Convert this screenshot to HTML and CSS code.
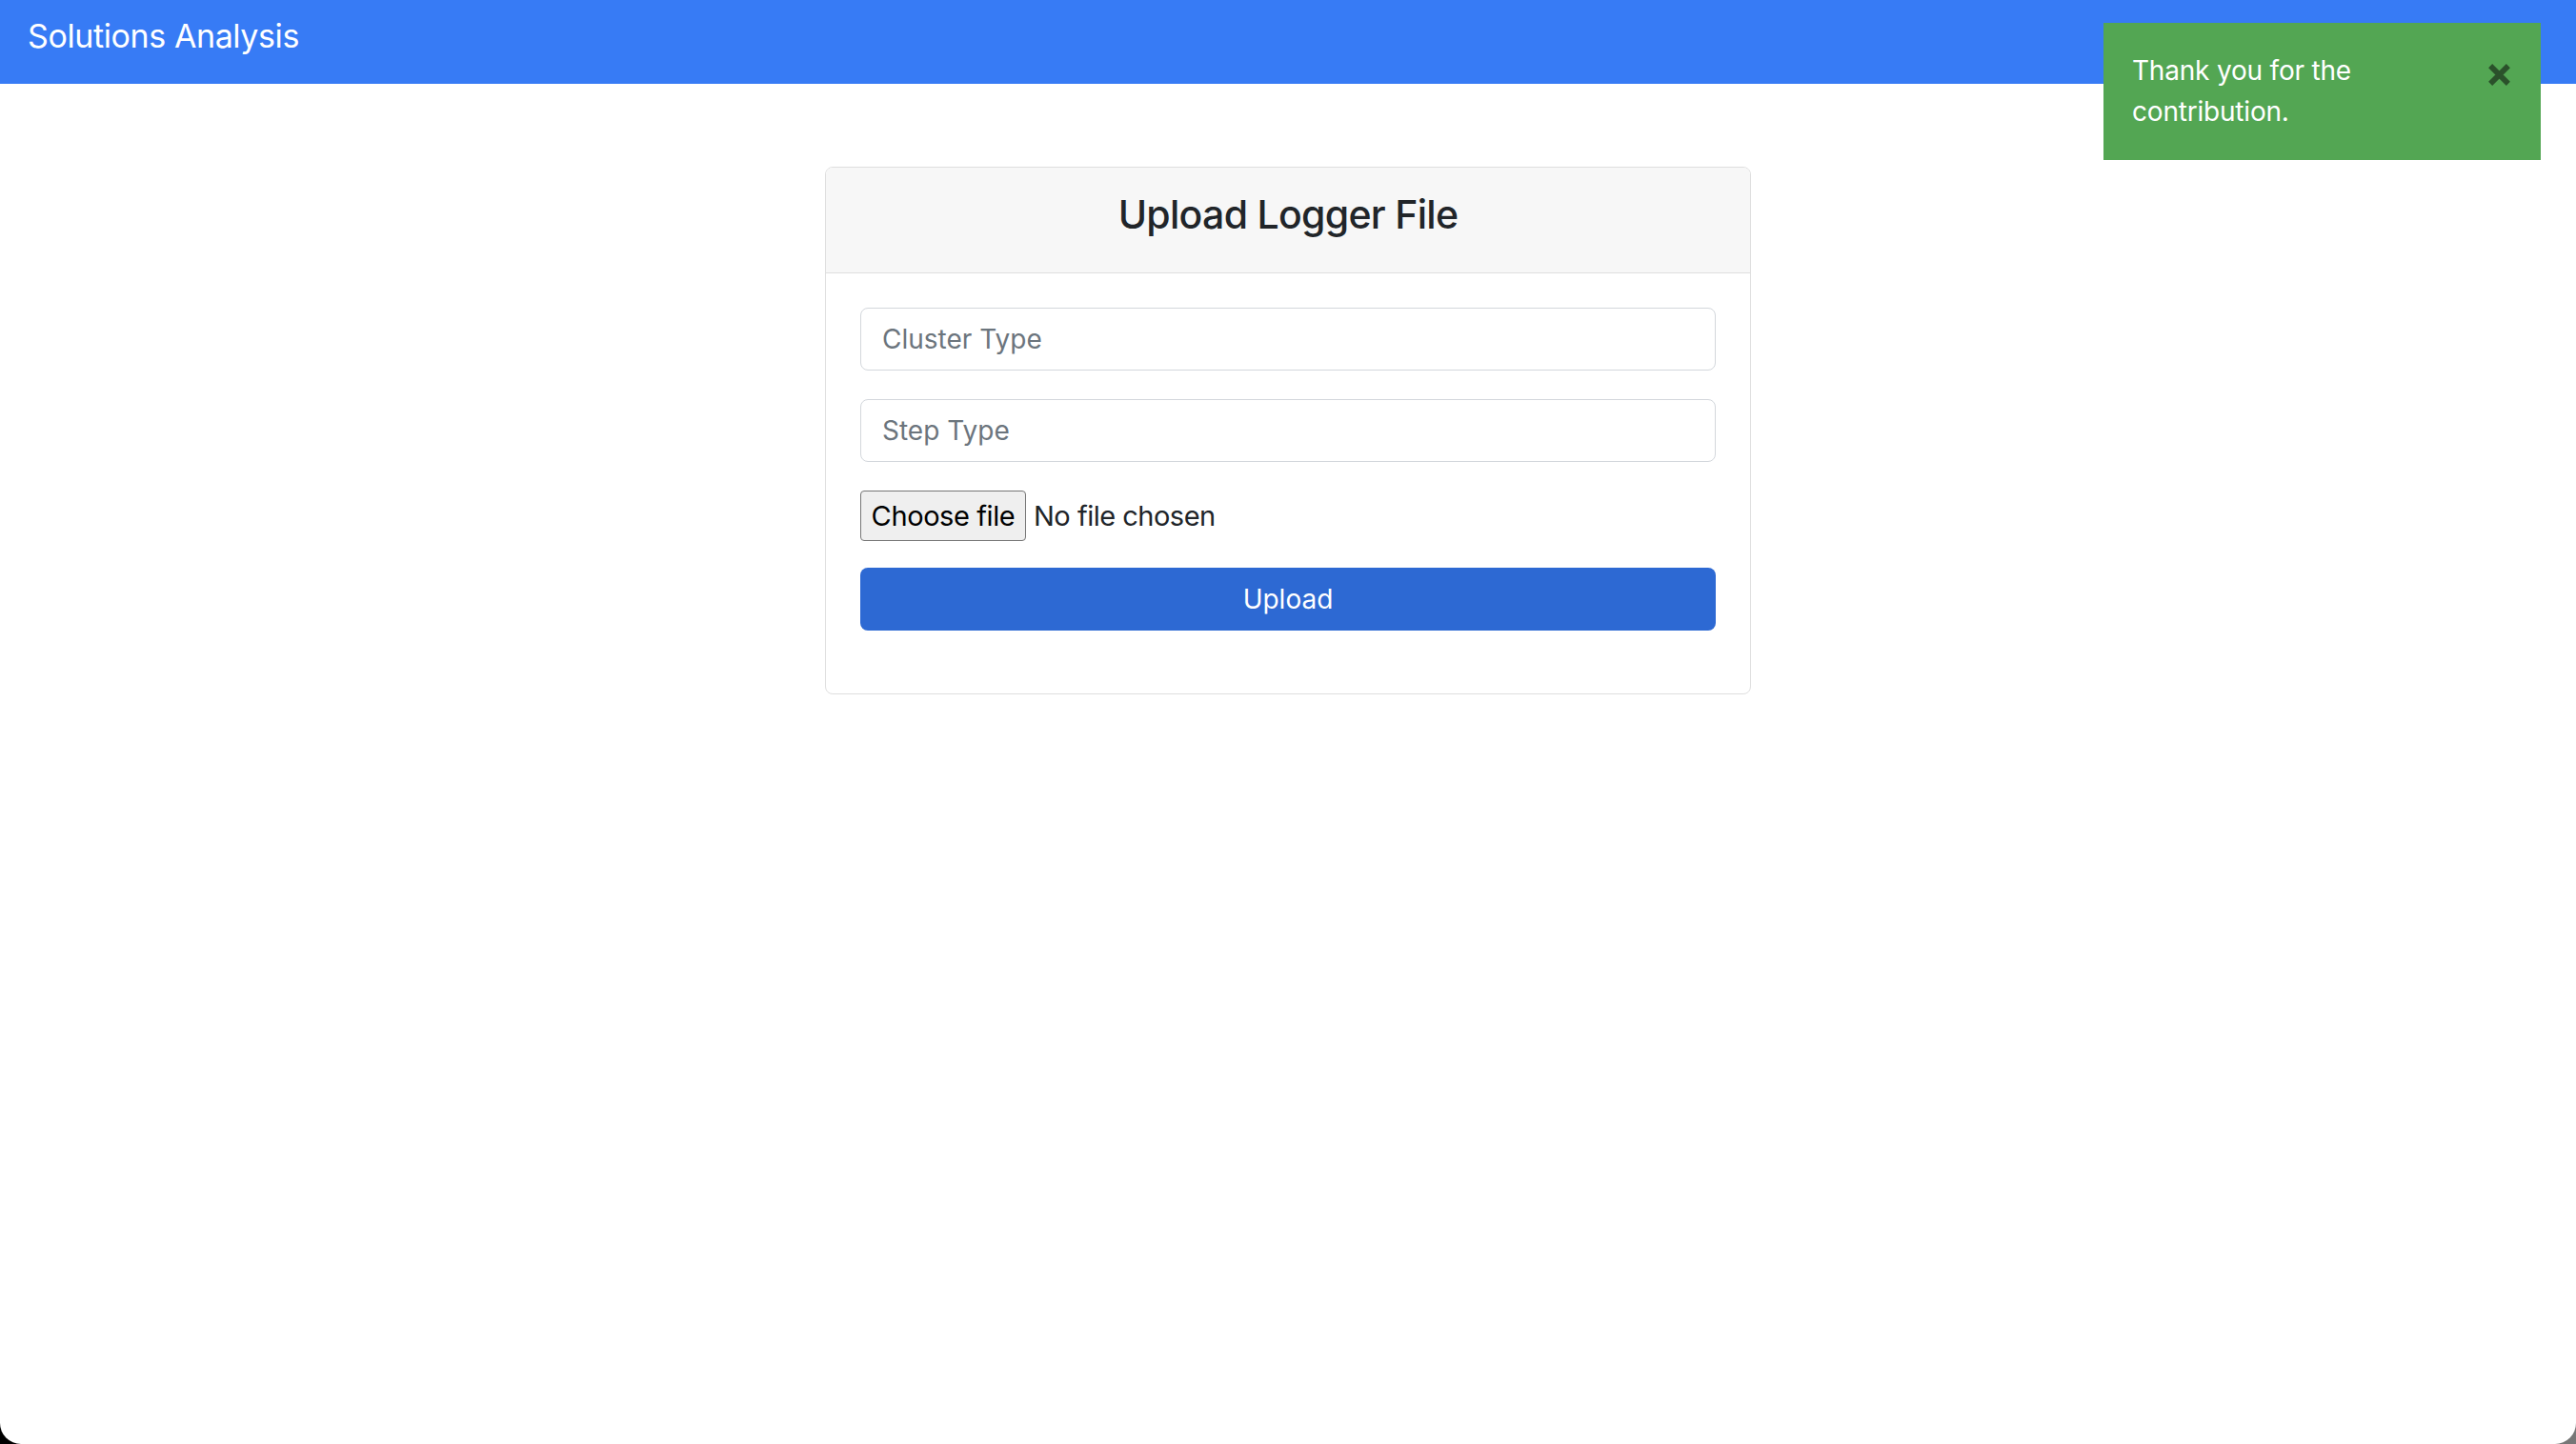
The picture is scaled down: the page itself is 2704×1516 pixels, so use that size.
FILE: index.html
```html
<!DOCTYPE html>
<html lang="en">
<head>
<meta charset="utf-8">
<title>Solutions Analysis</title>
<link rel="stylesheet" href="styles.css">
</head>
<body>
<div class="window">
  <header class="navbar">
    <span class="brand">Solutions Analysis</span>
  </header>

  <main class="main">
    <section class="card">
      <div class="card-header">
        <h2 class="card-title">Upload Logger File</h2>
      </div>
      <div class="card-body">
        <form class="upload-form">
          <input class="form-control" type="text" placeholder="Cluster Type">
          <input class="form-control" type="text" placeholder="Step Type">
          <div class="file-row">
            <button type="button" class="file-btn">Choose file</button>
            <span class="file-label">No file chosen</span>
          </div>
          <button type="button" class="btn-upload">Upload</button>
        </form>
      </div>
    </section>
  </main>

  <div class="toast">
    <div class="toast-text">Thank you for the contribution.</div>
    <span class="toast-close" aria-label="close">
      <svg viewBox="0 0 24 24" width="24" height="24"><path d="M3 3 L21 21 M21 3 L3 21" stroke="#2b512b" stroke-width="5.5" stroke-linecap="butt" fill="none"/></svg>
    </span>
  </div>
</div>
</body>
</html>
```

FILE: styles.css
```css
html {
  margin: 0;
  height: 100%;
  background: linear-gradient(to right, #000 0%, #333 50%, #777 100%);
}

body {
  margin: 0;
  height: 100%;
  font-family: Inter, "Noto Sans", "Liberation Sans", sans-serif;
  color: #212529;
}

.window {
  position: relative;
  height: 1516px;
  background: #fff;
  border-radius: 0 0 22px 22px;
  overflow: hidden;
}

.navbar {
  height: 88px;
  background: #377bf5;
  display: flex;
  align-items: center;
  padding: 0 29px 13px;
  box-sizing: border-box;
}

.brand {
  color: #fff;
  font-size: 34px;
  line-height: 1;
  letter-spacing: -0.4px;
}

.main {
  display: flex;
  justify-content: center;
  padding-top: 87px;
}

.card {
  width: 972px;
  border: 1px solid #dfdfdf;
  border-radius: 8px;
  box-sizing: border-box;
  overflow: hidden;
}

.card-header {
  height: 111px;
  box-sizing: border-box;
  background: #f7f7f7;
  border-bottom: 1px solid #dfdfdf;
  display: flex;
  align-items: center;
  justify-content: center;
  padding-bottom: 12px;
}

.card-title {
  margin: 0;
  font-size: 41px;
  font-weight: 550;
  letter-spacing: -0.7px;
  color: #212529;
}

.card-body {
  padding: 36px 36px 66px;
}

.upload-form {
  display: flex;
  flex-direction: column;
}

.form-control {
  height: 66px;
  box-sizing: border-box;
  border: 1px solid #d3d7dc;
  border-radius: 8px;
  padding: 0 22px;
  font-family: inherit;
  font-size: 28px;
  color: #495057;
  margin: 0 0 30px;
  outline: none;
}

.form-control::placeholder {
  color: #6c757d;
}

.file-row {
  display: flex;
  align-items: center;
  height: 53px;
  margin-bottom: 28px;
}

.file-btn {
  height: 53px;
  width: 174px;
  box-sizing: border-box;
  background: #efefef;
  border: 1px solid #767676;
  border-radius: 4px;
  font-family: inherit;
  font-size: 29px;
  color: #000;
  padding: 0;
  letter-spacing: -0.4px;
}

.file-label {
  margin-left: 8px;
  font-size: 29px;
  color: #212529;
  letter-spacing: -0.5px;
}

.btn-upload {
  height: 66px;
  border: none;
  border-radius: 8px;
  background: #2d69d3;
  color: #fff;
  font-family: inherit;
  font-size: 28px;
  padding: 0;
}

.toast {
  position: absolute;
  top: 24px;
  right: 37px;
  width: 459px;
  height: 144px;
  box-sizing: border-box;
  background: #53a653;
  display: flex;
  align-items: flex-start;
  padding: 29px 31px 0 30px;
}

.toast-text {
  flex: 1;
  color: #fff;
  font-size: 28px;
  line-height: 43px;
  letter-spacing: -0.2px;
  padding-right: 40px;
}

.toast-close {
  display: flex;
  margin-top: 13px;
}

.toast-close svg {
  width: 25px;
  height: 25px;
}
```
